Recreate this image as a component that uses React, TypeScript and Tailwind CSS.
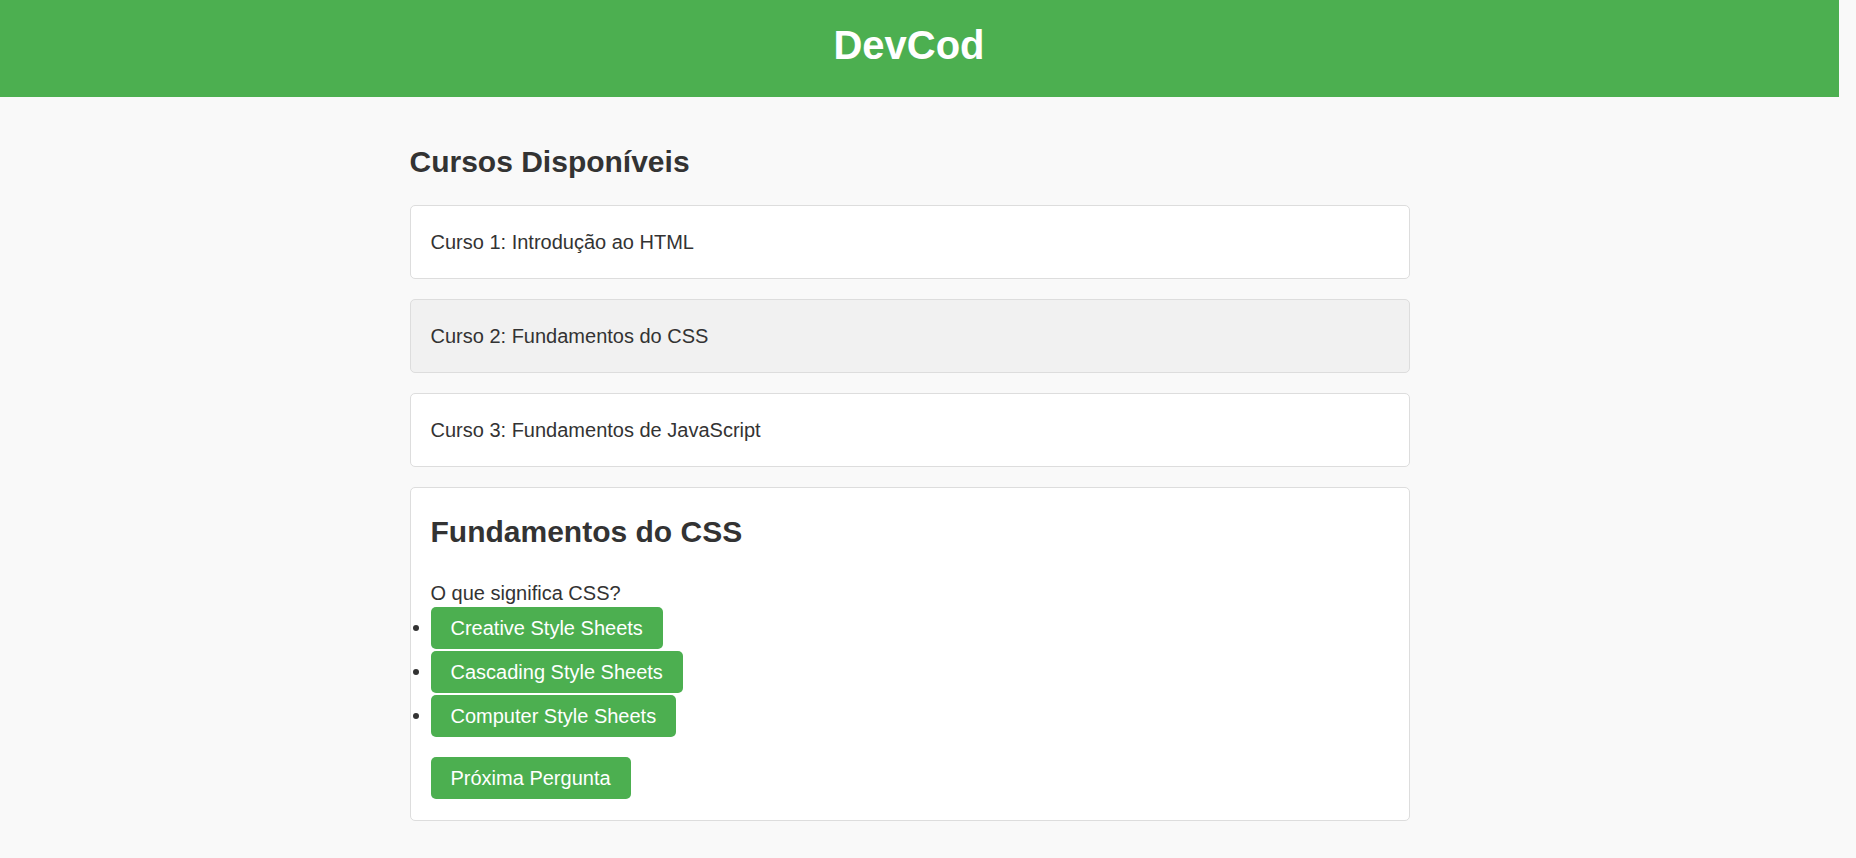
import React from "react";

const cursos = [
  { id: 1, label: "Curso 1: Introdução ao HTML", active: false },
  { id: 2, label: "Curso 2: Fundamentos do CSS", active: true },
  { id: 3, label: "Curso 3: Fundamentos de JavaScript", active: false },
];

const respostas = [
  "Creative Style Sheets",
  "Cascading Style Sheets",
  "Computer Style Sheets",
];

// Botão verde usado nas respostas e na navegação
function GreenButton({ children }: { children: React.ReactNode }) {
  return (
    <button className="h-[42px] px-[20px] rounded-[5px] bg-[#4caf50] text-white text-[20px] leading-[23px] flex items-center">
      {children}
    </button>
  );
}

export default function App() {
  return (
    <div className="min-h-screen bg-[#f9f9f9] text-[#333] font-['Liberation_Sans',Arial,sans-serif]">
      {/* Cabeçalho */}
      <header className="w-[1839px] h-[97px] bg-[#4caf50]">
        <div className="w-[1818px] pt-[23px] text-center">
          <h1 className="text-[40px] leading-[44px] font-bold text-white">DevCod</h1>
        </div>
      </header>

      <div className="w-[1819px]">
        <main className="w-[1000px] mx-auto pt-[48px] pb-[38px]">
          <h2 className="text-[30px] leading-[33px] font-bold">Cursos Disponíveis</h2>

          {/* Lista de cursos */}
          <div className="mt-[27px] flex flex-col gap-[20px]">
            {cursos.map((c) => (
              <div
                key={c.id}
                className={`border border-[#ddd] rounded-[5px] px-[20px] py-[20px] text-[20px] leading-[32px] ${
                  c.active ? "bg-[#f1f1f1]" : "bg-white"
                }`}
              >
                {c.label}
              </div>
            ))}

            {/* Quiz do curso */}
            <section className="border border-[#ddd] rounded-[5px] bg-white px-[20px] pt-[27px] pb-[21px]">
              <h2 className="text-[30px] leading-[33px] font-bold">Fundamentos do CSS</h2>
              <p className="mt-[34px] text-[20px] leading-[22px]">O que significa CSS?</p>
              <ul className="mt-[3px] flex flex-col gap-[2px]">
                {respostas.map((r) => (
                  <li key={r} className="flex items-center -ml-[18px]">
                    <span className="w-[6px] h-[6px] rounded-full bg-[#333] mr-[12px]" />
                    <GreenButton>{r}</GreenButton>
                  </li>
                ))}
              </ul>
              <div className="mt-[20px] flex">
                <GreenButton>Próxima Pergunta</GreenButton>
              </div>
            </section>
          </div>
        </main>
      </div>
    </div>
  );
}
